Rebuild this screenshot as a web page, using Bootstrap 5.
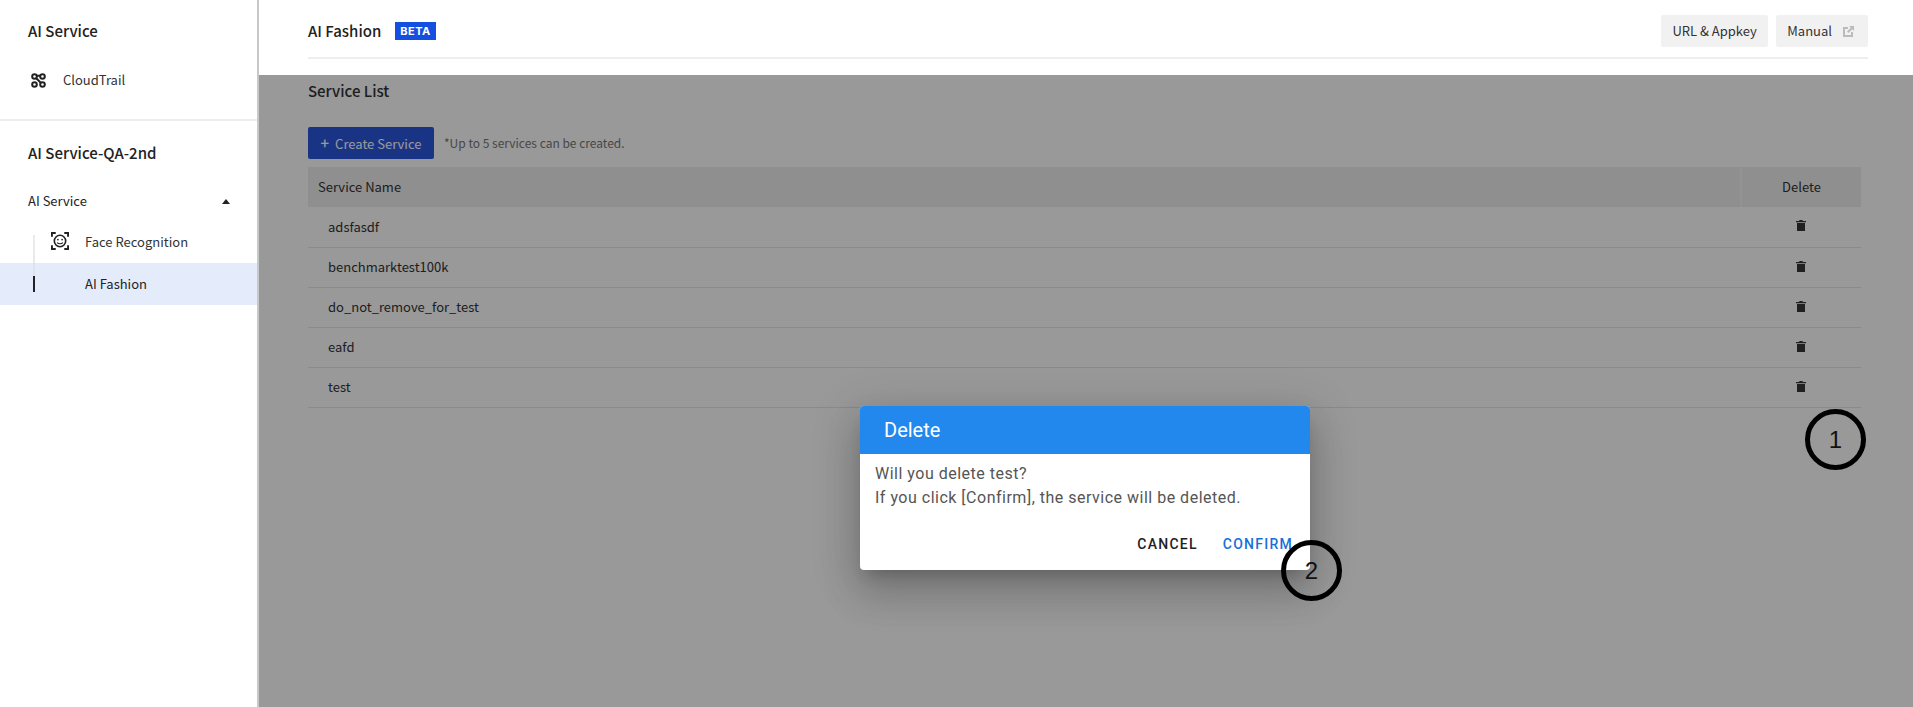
<!DOCTYPE html>
<html lang="en">
<head>
  <meta charset="UTF-8">
  <title>AI Fashion</title>
  <link href="https://cdn.jsdelivr.net/npm/bootstrap@5.3.3/dist/css/bootstrap.min.css" rel="stylesheet">
  <style>
    html, body { height: 100%; }
    body {
      font-family: "Noto Sans CJK KR", "Noto Sans", sans-serif;
      color: #222;
      overflow: hidden;
      font-size: 13px;
    }
    .app-shell { height: 707px; }

    .side-bar { width: 259px; flex: none; border-right: 2px solid #c8c8c8; }
    .side-top { height: 121px; border-bottom: 2px solid #eee; padding: 19px 0 0 28px; }
    .side-title { font-size: 15px; font-weight: 500; line-height: 24px; color: #222; }
    .side-link { display: flex; align-items: center; font-size: 13px; color: #333; line-height: 20px; }
    .side-top .side-link { margin-top: 27px; padding-left: 3px; }
    .side-top .side-link svg { margin-right: 17px; }
    .side-project { padding: 20px 28px 0; height: 60px; }
    .side-group { display: flex; justify-content: space-between; align-items: center; padding: 0 27px 0 28px; height: 40px; font-size: 13px; color: #222; }
    .caret-up { width: 0; height: 0; border-left: 4px solid transparent; border-right: 4px solid transparent; border-bottom: 5px solid #222; }
    .side-sub { position: relative; height: 42px; padding-left: 85px; display: flex; align-items: center; font-size: 13px; color: #333; }
    .side-sub.is-active { background: #e4ebfa; color: #222; }
    .sub-line { position: absolute; left: 33px; width: 2px; background: #eaeaea; }
    .sub-line-a { top: 14px; height: 28px; }
    .sub-line-b { top: 0; height: 13px; background: #dde3ee; }
    .sub-line-c { top: 13px; height: 16px; background: #222; }
    .sub-icon { position: absolute; left: 51px; top: 11px; }

    .main-pane { flex: 1; min-width: 0; position: relative; }
    .top-bar { height: 75px; padding: 0 45px 0 49px; }
    .top-inner { height: 59px; border-bottom: 2px solid #eee; padding-top: 15px; }
    .page-name { font-size: 15px; font-weight: 500; line-height: 31px; color: #222; }
    .beta-tag { background: #1450e0; color: #fff; font-family: "Inter", sans-serif; font-size: 11px; font-weight: 700; letter-spacing: .5px; line-height: 18px; padding: 0 5px; margin-left: 14px; }
    .grey-btn { background: #f1f1f1; color: #333; border: 0; border-radius: 2px; font-size: 13px; height: 32px; padding: 0 11.500px; line-height: 30px; }
    .grey-btn.has-icon { padding: 0 14px 0 11px; }
    .grey-btn svg { margin-left: 11px; vertical-align: -1px; }

    .list-area { padding: 0 52px 0 49px; }
    .list-title { font-size: 15px; font-weight: 500; line-height: 24px; margin-top: 4px; color: #333; }
    .create-row { margin-top: 24px; height: 32px; }
    .create-btn { background: #2b58de; color: #fff; border: 0; border-radius: 2px; height: 32px; width: 126px; font-size: 13px; padding: 0; line-height: 31px; }
    .plus-mark { font-size: 15px; font-weight: 500; margin-right: 6px; }
    .create-note { font-size: 12px; color: #777; margin-left: 10px; }

    .svc-table { margin: 8px 0 0; table-layout: fixed; width: 100%; }
    .svc-table th { background: #eee; font-weight: 400; font-size: 13px; color: #333; height: 40px; padding: 0 10px; border: 0; vertical-align: middle; }
    .svc-table th + th { border-left: 2px solid #f5f5f5; text-align: center; width: 120px; }
    .svc-table td { height: 40px; padding: 0 20px; font-size: 13px; color: #333; border-bottom: 1px solid #e6e6e6; vertical-align: middle; }
    .svc-table td + td { text-align: center; padding: 0 0 2px; }
    .svc-table td svg { display: block; margin: 0 auto; }

    .dim-layer { position: absolute; left: 0; right: 0; top: 75px; bottom: 0; background: rgba(0, 0, 0, .4); }

    .confirm-box { position: absolute; left: 860px; top: 406px; width: 450px; height: 164px; background: #fff; border-radius: 4px; overflow: hidden; box-shadow: 0 11px 15px -7px rgba(0,0,0,.2), 0 24px 38px 3px rgba(0,0,0,.14), 0 9px 46px 8px rgba(0,0,0,.12); font-family: Roboto, sans-serif; }
    .confirm-head { background: #2288ee; color: #fff; height: 48px; padding: 0 24px; font-size: 20px; line-height: 48px; }
    .confirm-body { padding: 8px 16px 0 15px; font-size: 16px; line-height: 24px; letter-spacing: .5px; color: #555; }
    .confirm-foot { padding: 22px 17px 0 0; gap: 25px; }
    .confirm-foot span { font-size: 14px; font-weight: 500; letter-spacing: 1.250px; line-height: 24px; color: #222; }
    .confirm-foot .go { color: #1a6fd6; }

    .step-mark { position: absolute; width: 61px; height: 61px; border: 5px solid #000; border-radius: 50%; background: transparent; color: #111; font-family: "Liberation Sans", sans-serif; font-size: 24px; display: flex; align-items: center; justify-content: center; }
    .step-one { left: 1805px; top: 409px; }
    .step-two { left: 1281px; top: 540px; }
  </style>
</head>
<body>
  <div class="app-shell d-flex position-relative">
    <aside class="side-bar">
      <div class="side-top">
        <div class="side-title">AI Service</div>
        <div class="side-link">
          <svg width="15" height="15" viewBox="0 0 15 15" fill="none" stroke="#222" stroke-width="2"><circle cx="3.500" cy="3.500" r="2.300"/><circle cx="11.500" cy="3.500" r="2.300"/><circle cx="3.500" cy="11.500" r="2.300"/><circle cx="11.500" cy="11.500" r="2.300"/><path d="M5 5l5 5M5.500 2.800h4"/></svg>
          CloudTrail
        </div>
      </div>
      <div class="side-project side-title">AI Service-QA-2nd</div>
      <div class="side-group"><span>AI Service</span><span class="caret-up"></span></div>
      <div class="side-sub">
        <span class="sub-line sub-line-a"></span>
        <svg class="sub-icon" width="18" height="18" viewBox="0 0 19 19" fill="none" stroke="#222" stroke-width="1.700"><path d="M1 5V1h4M14 1h4v4M18 14v4h-4M5 18H1v-4" stroke-width="2"/><circle cx="9.500" cy="9.500" r="6"/><path d="M6.500 11c1 1.800 5 1.800 6 0" stroke-width="1.200"/><circle cx="7.300" cy="8" r=".9" fill="#222" stroke="none"/><circle cx="11.700" cy="8" r=".9" fill="#222" stroke="none"/></svg>
        Face Recognition
      </div>
      <div class="side-sub is-active">
        <span class="sub-line sub-line-b"></span>
        <span class="sub-line sub-line-c"></span>
        AI Fashion
      </div>
    </aside>

    <main class="main-pane">
      <div class="top-bar">
        <div class="top-inner d-flex justify-content-between align-items-start">
          <div class="d-flex align-items-center">
            <span class="page-name">AI Fashion</span>
            <span class="beta-tag">BETA</span>
          </div>
          <div class="d-flex gap-2">
            <button type="button" class="btn grey-btn">URL &amp; Appkey</button>
            <button type="button" class="btn grey-btn has-icon">Manual<svg width="11" height="11" viewBox="0 0 11 11" fill="#bbb"><path d="M0 1h5v2H2v6h6V6h2v5H0z"/><path d="M6 0h5v5L9.200 3.200 5.500 7 4 5.500 7.800 1.800z"/></svg></button>
          </div>
        </div>
      </div>

      <div class="list-area">
        <div class="list-title">Service List</div>
        <div class="create-row d-flex align-items-center">
          <button type="button" class="btn create-btn"><span class="plus-mark">+</span>Create Service</button>
          <span class="create-note">*Up to 5 services can be created.</span>
        </div>
        <table class="table svc-table">
          <thead><tr><th>Service Name</th><th>Delete</th></tr></thead>
          <tbody id="svcRows"></tbody>
        </table>
      </div>

      <div class="dim-layer"></div>
    </main>

    <div class="confirm-box">
      <div class="confirm-head">Delete</div>
      <div class="confirm-body">Will you delete test?<br>If you click [Confirm], the service will be deleted.</div>
      <div class="confirm-foot d-flex justify-content-end">
        <span>CANCEL</span>
        <span class="go">CONFIRM</span>
      </div>
    </div>

    <div class="step-mark step-one">1</div>
    <div class="step-mark step-two">2</div>
  </div>

  <script>
    const names = ["adsfasdf", "benchmarktest100k", "do_not_remove_for_test", "eafd", "test"];
    const trash = '<svg width="10" height="11" viewBox="0 0 10 11" fill="#363636"><path d="M3.500 0h3l.4 1H10v1.300H0V1h3.100zM1 3h8v8H1z"/></svg>';
    document.getElementById("svcRows").innerHTML = names
      .map(n => `<tr><td>${n}</td><td>${trash}</td></tr>`)
      .join("");
  </script>
  <script src="https://cdn.jsdelivr.net/npm/bootstrap@5.3.3/dist/js/bootstrap.bundle.min.js"></script>
</body>
</html>
